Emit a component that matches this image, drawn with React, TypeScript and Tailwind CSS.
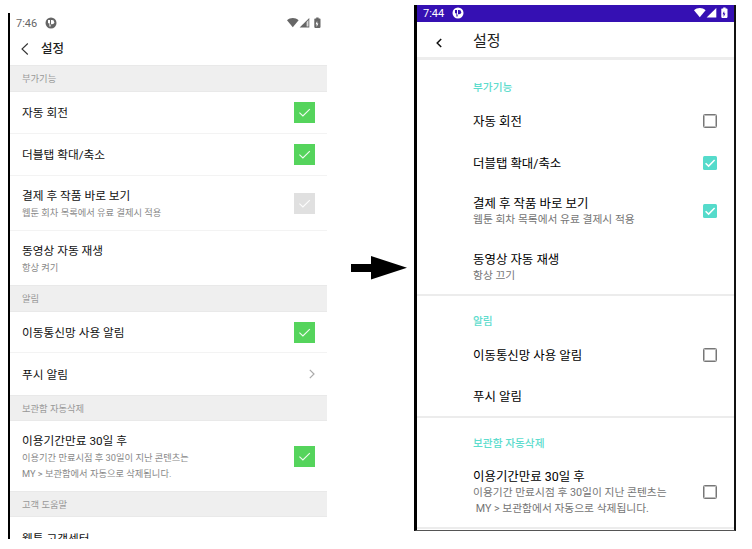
import type { ReactNode } from "react";

function StatusIcons({ className }: { className: string }) {
  return (
    <svg width="35" height="12" viewBox="0 0 35 12" className={className} fill="currentColor">
      <path d="M0 3.2C3.2.4 8.4.4 11.6 3.2L5.8 10.2Z" />
      <path d="M12.6 10.4 22.3.9V10.4Z" />
      <path d="M19.6 4.9 21.5 3.1V9.6H19.6Z" className="fill-white" fillOpacity=".75" />
      <path d="M29.2.6h2.4v1h1.2a.7.7 0 0 1 .7.7v7.8a.8.8 0 0 1-.8.8h-4.6a.8.8 0 0 1-.8-.8V2.3a.7.7 0 0 1 .7-.7h1.2Z" />
    </svg>
  );
}

function Bolt({ className }: { className: string }) {
  return (
    <svg width="4" height="6" viewBox="0 0 4 6" className={className} fill="currentColor">
      <path d="M2.1 0 .6 3.3h1V6l1.8-3.5h-1Z" />
    </svg>
  );
}

function AppMark({ className, hole }: { className: string; hole: string }) {
  return (
    <svg width="12" height="12" viewBox="0 0 12 12" className={className}>
      <circle cx="6" cy="6" r="5.5" fill="currentColor" />
      <path d="M3 3.1H5V7.4H5.6V9.4H4.4V6.3H3Z" className={hole} />
      <path d="M6 3.1H7.1A2.1 2.1 0 0 1 7.1 7.3H6Z" className={hole} />
    </svg>
  );
}

function GreenCheck({ off }: { off?: boolean }) {
  return (
    <span
      className={
        off
          ? "flex size-[21px] shrink-0 items-center justify-center bg-[#e0e0e0]"
          : "flex size-[21px] shrink-0 items-center justify-center bg-[#55d45c]"
      }
    >
      <svg width="21" height="21" viewBox="0 0 21 21" fill="none" stroke="white" strokeWidth="1.15" strokeOpacity=".9">
        <path d="M5.4 10.7 8.9 14 15.8 7.2" />
      </svg>
    </span>
  );
}

function TealCheck({ on }: { on?: boolean }) {
  return on ? (
    <span className="size-3.5 shrink-0 rounded-[1.5px] bg-[#55dbcb]">
      <svg width="14" height="14" viewBox="0 0 14 14" fill="none" stroke="white" strokeWidth="1.5">
        <path d="M2.6 7.2 5.6 10.1 11.6 4" />
      </svg>
    </span>
  ) : (
    <span className="size-3.5 shrink-0 rounded-[1.5px] border border-[#777]">
      <span className="block size-full border border-[#777]/50" />
    </span>
  );
}

function GrayHeader({ height, children }: { height: string; children: ReactNode }) {
  return (
    <div className={`${height} flex shrink-0 items-center border-y border-[#e9e9e9] bg-[#efefef] pt-px pl-3 text-[9.3px] text-[#989898]`}>
      {children}
    </div>
  );
}

function OldRow({ height, title, sub, line, children }: { height: string; title: string; sub?: string[]; line?: boolean; children?: ReactNode }) {
  return (
    <div className={`${height} flex shrink-0 items-center justify-between pr-3 pl-3 ${line ? "border-b border-[#f3f3f3]" : ""}`}>
      <div className="pt-0.5">
        <div className="text-[11.7px] leading-[17px] text-[#111]">{title}</div>
        {sub?.map((s) => (
          <div key={s} className="text-[9.27px] leading-4 text-[#888]">{s}</div>
        ))}
      </div>
      {children}
    </div>
  );
}

function NewRow({ height, title, sub, children }: { height: string; title: string; sub?: string[]; children?: ReactNode }) {
  return (
    <div className={`${height} flex shrink-0 items-center justify-between pr-[17px] pl-14`}>
      <div className="pt-0.5">
        <div className="text-[12.45px] leading-4 text-black">{title}</div>
        {sub?.map((s) => (
          <div key={s} className="text-[10.75px] leading-4 whitespace-pre text-[#757575]">{s}</div>
        ))}
      </div>
      {children}
    </div>
  );
}

function Category({ box, children }: { box: string; children: ReactNode }) {
  return (
    <div className={`${box} flex shrink-0 items-center pl-14 text-[10.7px] font-medium text-[#5ddccd]`}>
      {children}
    </div>
  );
}

function OldPhone() {
  return (
    <section className="mt-[13px] flex h-[526px] w-[319px] shrink-0 flex-col overflow-hidden border-l-2 border-black bg-white">
      <div className="flex h-[19px] shrink-0 items-center pr-1 pl-1.5 text-[#666]">
        <span className="pt-1 text-[11px]">7:46</span>
        <AppMark className="ml-2" hole="fill-white" />
        <span className="relative ml-auto pr-px">
          <StatusIcons className="block" />
          <Bolt className="absolute top-[4px] left-[28.4px] text-white" />
        </span>
      </div>
      <div className="flex h-[33px] shrink-0 items-center pl-[11px]">
        <svg width="8" height="12" viewBox="0 0 8 12" fill="none" stroke="#333" strokeWidth="1.1">
          <path d="M6.8.5 1 6 6.8 11.5" />
        </svg>
        <span className="ml-3 pt-0.5 text-[12.5px] font-medium text-[#222]">설정</span>
      </div>
      <GrayHeader height="h-[27px]">부가기능</GrayHeader>
      <OldRow height="h-[42px]" title="자동 회전" line><GreenCheck /></OldRow>
      <OldRow height="h-[42px]" title="더블탭 확대/축소" line><GreenCheck /></OldRow>
      <OldRow height="h-[55px]" title="결제 후 작품 바로 보기" sub={["웹툰 회차 목록에서 유료 결제시 적용"]} line><GreenCheck off /></OldRow>
      <OldRow height="h-[54px]" title="동영상 자동 재생" sub={["항상 켜기"]} />
      <GrayHeader height="h-[27px]">알림</GrayHeader>
      <OldRow height="h-[41px]" title="이동통신망 사용 알림" line><GreenCheck /></OldRow>
      <OldRow height="h-[42px]" title="푸시 알림">
        <svg width="6" height="10" viewBox="0 0 6 10" fill="none" stroke="#aaa" strokeWidth="1.2">
          <path d="M.8.8 5 5 .8 9.2" />
        </svg>
      </OldRow>
      <GrayHeader height="h-[26px]">보관함 자동삭제</GrayHeader>
      <OldRow height="h-[70px]" title="이용기간만료 30일 후" sub={["이용기간 만료시점 후 30일이 지난 콘텐츠는", "MY > 보관함에서 자동으로 삭제됩니다."]}>
        <GreenCheck />
      </OldRow>
      <GrayHeader height="h-[26px]">고객 도움말</GrayHeader>
      <OldRow height="h-[42px]" title="웹툰 고객센터" />
    </section>
  );
}

function NewPhone() {
  return (
    <section className="mt-[5px] flex h-[526px] w-[322px] shrink-0 flex-col overflow-hidden border-r-2 border-b border-l-3 border-r-[#111] border-b-[#555] border-l-black bg-white">
      <div className="flex h-[17px] shrink-0 items-center bg-[#3510b3] pr-[5px] pl-1.5 text-white">
        <span className="pt-0.5 text-[11px]">7:44</span>
        <AppMark className="mb-px ml-2" hole="fill-[#3510b3]" />
        <span className="relative mb-px ml-auto">
          <StatusIcons className="block" />
          <Bolt className="absolute top-[4px] left-[28.4px] text-[#3510b3]" />
        </span>
      </div>
      <div className="flex h-[38px] shrink-0 items-center border-b-3 border-[#ededed] pl-[19px]">
        <svg width="6" height="10" viewBox="0 0 6 10" fill="none" stroke="#111" strokeWidth="1.5" className="mt-[7px]">
          <path d="M5.2 1 1.2 5 5.2 9" />
        </svg>
        <span className="ml-[31px] pt-[3px] text-[15px] text-[#222]">설정</span>
      </div>
      <Category box="h-10 pt-4">부가기능</Category>
      <NewRow height="h-[42px]" title="자동 회전"><TealCheck /></NewRow>
      <NewRow height="h-[41px]" title="더블탭 확대/축소"><TealCheck on /></NewRow>
      <NewRow height="h-14" title="결제 후 작품 바로 보기" sub={["웹툰 회차 목록에서 유료 결제시 적용"]}><TealCheck on /></NewRow>
      <NewRow height="h-[55px]" title="동영상 자동 재생" sub={["항상 끄기"]} />
      <Category box="h-10 border-t-2 border-[#ececec] pt-3.5">알림</Category>
      <NewRow height="h-[42px]" title="이동통신망 사용 알림"><TealCheck /></NewRow>
      <NewRow height="h-10" title="푸시 알림" />
      <Category box="h-10 border-t-2 border-[#ececec] pt-3.5">보관함 자동삭제</Category>
      <NewRow height="h-[71px]" title="이용기간만료 30일 후" sub={["이용기간 만료시점 후 30일이 지난 콘텐츠는", " MY > 보관함에서 자동으로 삭제됩니다."]}>
        <TealCheck />
      </NewRow>
      <div className="h-0.5 shrink-0 bg-[#ececec]" />
    </section>
  );
}

export default function App() {
  return (
    <main className="flex h-[549px] w-[752px] items-start overflow-hidden bg-white pl-2 font-['Roboto','Noto_Sans_CJK_KR',sans-serif]">
      <OldPhone />
      <svg width="56" height="24" viewBox="0 0 56 24" className="mt-64 mr-[7px] ml-6 shrink-0">
        <path d="M0 8H20V0L56 11.7 20 23.5V16H0Z" />
      </svg>
      <NewPhone />
    </main>
  );
}
